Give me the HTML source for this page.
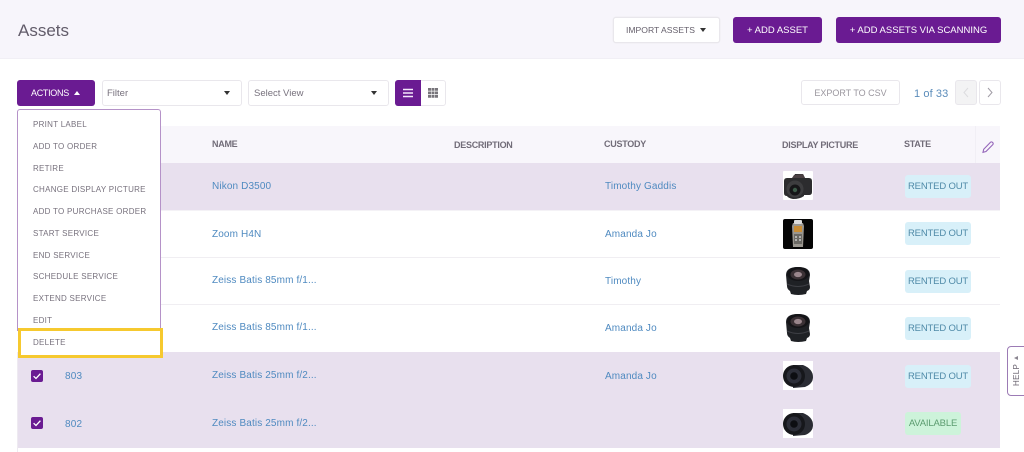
<!DOCTYPE html>
<html><head><meta charset="utf-8"><title>Assets</title>
<style>
html,body{margin:0;padding:0;background:#fff}
body{width:1024px;height:452px;position:relative;overflow:hidden;font-family:"Liberation Sans",sans-serif;color:#6a6470}
#w{position:absolute;left:0;top:0;width:1024px;height:452px;overflow:hidden;filter:blur(.3px)}
.a{position:absolute;white-space:nowrap}
.btn{position:absolute;box-sizing:border-box;border-radius:3px;background:#6a1b92;color:#fff;font-size:9.5px;line-height:27px;text-align:center;height:26px}
.w{position:absolute;box-sizing:border-box;background:#fff;border:1px solid #e9e7ec;border-radius:3px}
.row{position:absolute;left:18px;width:982px}
.p{background:#e8e0ee}
.h{position:absolute;font-size:9px;line-height:14px;color:#5f5966;font-weight:bold;letter-spacing:-.27px;white-space:nowrap;opacity:.88}
.l{position:absolute;font-size:10px;line-height:14px;margin-top:2px;color:#4f8ac0;letter-spacing:.13px;white-space:nowrap}
.b{position:absolute;left:905px;width:66px;height:23px;background:#d8f0f9;border-radius:3px;color:#4f8aa8;font-size:9.5px;letter-spacing:-.17px;line-height:23px;text-align:center}
.m{position:absolute;left:33px;font-size:8px;line-height:12px;margin-top:1px;color:#77717d;letter-spacing:.27px;white-space:nowrap}
.car{position:absolute;width:0;height:0;border-left:3.5px solid transparent;border-right:3.5px solid transparent;border-top:4px solid #333}
svg{position:absolute;display:block}
</style></head><body><div id="w">
<div class="a" style="left:0;top:0;width:1024px;height:59px;background:#f7f5fb;border-bottom:1px solid #f1eff5;box-sizing:border-box"></div>
<div class="a" style="left:18px;top:20px;font-size:17px;line-height:22px;color:#625c6a">Assets</div>
<div class="w" style="left:613px;top:17px;width:107px;height:26px;font-size:8.6px;line-height:25px;padding-left:12px;color:#66606c;box-shadow:0 0 1px #ddd">IMPORT ASSETS</div>
<div class="car" style="left:700px;top:28px"></div>
<div class="btn" style="left:733px;top:17px;width:89px">+ ADD ASSET</div>
<div class="btn" style="left:836px;top:17px;width:165px">+ ADD ASSETS VIA SCANNING</div>

<div class="btn" style="left:17px;top:80px;width:78px;font-size:9px;letter-spacing:-.3px;text-align:left;padding-left:14px">ACTIONS</div>
<div class="a" style="left:74px;top:91px;width:0;height:0;border-left:3.5px solid transparent;border-right:3.5px solid transparent;border-bottom:4px solid #fff"></div>
<div class="w" style="left:102px;top:80px;width:140px;height:26px;font-size:9.5px;line-height:25px;padding-left:4px;color:#77717d">Filter</div>
<div class="car" style="left:224px;top:91px"></div>
<div class="w" style="left:248px;top:80px;width:141px;height:26px;font-size:9.5px;line-height:25px;padding-left:5px;color:#77717d">Select View</div>
<div class="car" style="left:371px;top:91px"></div>
<div class="w" style="left:395px;top:80px;width:51px;height:26px"></div>
<div class="a" style="left:395px;top:80px;width:26px;height:26px;background:#6a1b92;border-radius:3px 0 0 3px"></div>
<svg style="left:403px;top:88px" width="10" height="10"><path d="M0 1.500h10M0 5h10M0 8.500h10" stroke="#f4e8fb" stroke-width="1.600"/></svg>
<svg style="left:428px;top:88px" width="10" height="10"><path d="M0 0h3v2.800H0zM3.500 0h3v2.800h-3zM7 0h3v2.800H7zM0 3.500h3v2.800H0zM3.500 3.500h3v2.800h-3zM7 3.500h3v2.800H7zM0 7h3v2.800H0zM3.500 7h3v2.800h-3zM7 7h3v2.800H7z" fill="#77747a"/></svg>

<div class="w" style="left:801px;top:80px;width:99px;height:25px;font-size:9px;line-height:24px;text-align:center;color:#9b979f">EXPORT TO CSV</div>
<div class="a" style="left:914px;top:87px;font-size:11px;line-height:15px;color:#5b8cba;letter-spacing:.1px">1 of 33</div>
<div class="w" style="left:955px;top:80px;width:22px;height:25px;background:#f3f3f4"></div>
<svg style="left:962px;top:87px" width="8" height="11"><path d="M6 1L2 5.500 6 10" fill="none" stroke="#dcdcdf" stroke-width="1"/></svg>
<div class="w" style="left:979px;top:80px;width:22px;height:25px"></div>
<svg style="left:986px;top:87px" width="8" height="11"><path d="M2 1l4 4.500L2 10" fill="none" stroke="#a09ca5" stroke-width="1"/></svg>

<div class="row" style="top:126px;height:37px;background:#f8f6fb"></div>
<div class="a" style="left:975px;top:126px;width:1px;height:37px;background:#f1eff5"></div>
<div class="row p" style="top:163px;height:47px"></div>
<div class="row" style="top:257px;height:1px;background:#f0eef2"></div>
<div class="row" style="top:304px;height:1px;background:#f0eef2"></div>
<div class="row" style="top:210px;height:1px;background:#f4f2f6"></div>
<div class="row p" style="top:352px;height:96px"></div>
<div class="a" style="left:17px;top:352px;width:1px;height:100px;background:#eeeaf1"></div>

<div class="h" style="left:212px;top:137px">NAME</div>
<div class="h" style="left:454px;top:138px">DESCRIPTION</div>
<div class="h" style="left:604px;top:137px">CUSTODY</div>
<div class="h" style="left:782px;top:138px">DISPLAY PICTURE</div>
<div class="h" style="left:904px;top:137px">STATE</div>
<svg style="left:981px;top:140px" width="14" height="14"><path d="M2 12.300l.7-3L9.500 2.300a1.300 1.300 0 0 1 1.900 0l.4.4a1.300 1.300 0 0 1 0 1.900L5 11.500z" fill="none" stroke="#9566ba" stroke-width="1.100"/></svg>

<div class="l" style="left:212px;top:178px">Nikon D3500</div>
<div class="l" style="left:212px;top:226px">Zoom H4N</div>
<div class="l" style="left:212px;top:272px">Zeiss Batis 85mm f/1...</div>
<div class="l" style="left:212px;top:319px">Zeiss Batis 85mm f/1...</div>
<div class="l" style="left:212px;top:367px">Zeiss Batis 25mm f/2...</div>
<div class="l" style="left:212px;top:415px">Zeiss Batis 25mm f/2...</div>
<div class="l" style="left:605px;top:178px">Timothy Gaddis</div>
<div class="l" style="left:605px;top:226px">Amanda Jo</div>
<div class="l" style="left:605px;top:273px">Timothy</div>
<div class="l" style="left:605px;top:320px">Amanda Jo</div>
<div class="l" style="left:605px;top:368px">Amanda Jo</div>
<div class="l" style="left:65px;top:368px;letter-spacing:.2px">803</div>
<div class="l" style="left:65px;top:416px;letter-spacing:.2px">802</div>

<svg style="left:31px;top:370px" width="12" height="12"><rect width="12" height="12" rx="2" fill="#6a1b92"/><path d="M2.600 6.200l2.400 2.300 4.400-4.800" fill="none" stroke="#fff" stroke-width="1.300"/></svg>
<svg style="left:31px;top:417px" width="12" height="12"><rect width="12" height="12" rx="2" fill="#6a1b92"/><path d="M2.600 6.200l2.400 2.300 4.400-4.800" fill="none" stroke="#fff" stroke-width="1.300"/></svg>

<!-- camera -->
<svg style="left:783px;top:171px" width="30" height="30"><rect width="30" height="29" rx="1" fill="#fff"/><path d="M1 10q0-3 3-3h6l2-4h8l2 4h4q3 0 3 3v11q0 3-3 3h-5v1q-4 3-11 3-5-1-6-3-3 0-3-3z" fill="#2c2c2e"/><path d="M11 4l9-1 2 4H9z" fill="#4b4144"/><circle cx="12" cy="18" r="8.500" fill="#3d3d3f"/><circle cx="12" cy="19" r="5.500" fill="#161618"/><circle cx="12" cy="19" r="2.200" fill="#3c5a48"/></svg>
<!-- recorder -->
<svg style="left:783px;top:219px" width="30" height="30"><rect width="30" height="30" rx="2" fill="#050505"/><path d="M10 4h10l1 3-1 21H10L9 7z" fill="#9a968f"/><rect x="11" y="1" width="8" height="4" rx="1" fill="#dcdcdc"/><rect x="11" y="7" width="8" height="6" fill="#c98d35"/><rect x="11" y="15" width="8" height="10" fill="#6b6964"/><path d="M12 18h2M16 18h2M12 21h2M16 21h2" stroke="#ddd" stroke-width="1.200"/></svg>
<!-- lens 85 -->
<svg style="left:785px;top:266px" width="26" height="30"><path d="M1 9q0-8 12-8t12 8l-1 6 1 6q0 3-3 4l-1 3q-8 2-15 0l-1-3q-3-2-3-5z" fill="#1f2125"/><ellipse cx="13" cy="8" rx="11" ry="7" fill="#141417"/><ellipse cx="13" cy="8.500" rx="7.500" ry="5" fill="#3b3135"/><ellipse cx="13" cy="8.500" rx="4" ry="2.600" fill="#9a868c"/><path d="M2 18q11 5 22 0" stroke="#3d3e44" fill="none"/></svg>
<svg style="left:785px;top:313px" width="26" height="30"><path d="M1 9q0-8 12-8t12 8l-1 6 1 6q0 3-3 4l-1 3q-8 2-15 0l-1-3q-3-2-3-5z" fill="#1f2125"/><ellipse cx="13" cy="8" rx="11" ry="7" fill="#141417"/><ellipse cx="13" cy="8.500" rx="7.500" ry="5" fill="#3b3135"/><ellipse cx="13" cy="8.500" rx="4" ry="2.600" fill="#9a868c"/><path d="M2 18q11 5 22 0" stroke="#3d3e44" fill="none"/></svg>
<!-- lens 25 -->
<svg style="left:783px;top:361px" width="30" height="30"><rect width="30" height="29" fill="#fff"/><path d="M10 4h10q10 4 10 12 0 7-8 10l-12 1z" fill="#2a2c33"/><circle cx="11" cy="15" r="11" fill="#16171b"/><circle cx="11" cy="15" r="7.500" fill="#2c2e38"/><circle cx="11" cy="15" r="3.800" fill="#0d0e12"/></svg>
<svg style="left:783px;top:409px" width="30" height="30"><rect width="30" height="29" fill="#fff"/><path d="M10 4h10q10 4 10 12 0 7-8 10l-12 1z" fill="#2a2c33"/><circle cx="11" cy="15" r="11" fill="#16171b"/><circle cx="11" cy="15" r="7.500" fill="#2c2e38"/><circle cx="11" cy="15" r="3.800" fill="#0d0e12"/></svg>

<div class="b" style="top:175px">RENTED OUT</div>
<div class="b" style="top:222px">RENTED OUT</div>
<div class="b" style="top:270px">RENTED OUT</div>
<div class="b" style="top:317px">RENTED OUT</div>
<div class="b" style="top:365px">RENTED OUT</div>
<div class="b" style="top:412px;width:56px;background:#cdf3da;color:#5c9c70">AVAILABLE</div>

<!-- dropdown -->
<div class="a" style="left:17px;top:109px;width:144px;height:222px;box-sizing:border-box;background:#fff;border:1px solid #b592c8;border-bottom:0;border-radius:3px 3px 0 0"></div>
<div class="a" style="left:18px;top:328px;width:145px;height:30px;box-sizing:border-box;background:#fff;border:3px solid #f6c92f"></div>
<div class="m" style="top:118px">PRINT LABEL</div>
<div class="m" style="top:140px">ADD TO ORDER</div>
<div class="m" style="top:162px">RETIRE</div>
<div class="m" style="top:183px">CHANGE DISPLAY PICTURE</div>
<div class="m" style="top:205px">ADD TO PURCHASE ORDER</div>
<div class="m" style="top:227px">START SERVICE</div>
<div class="m" style="top:249px">END SERVICE</div>
<div class="m" style="top:270px">SCHEDULE SERVICE</div>
<div class="m" style="top:292px">EXTEND SERVICE</div>
<div class="m" style="top:314px">EDIT</div>
<div class="m" style="top:336px">DELETE</div>

<!-- help -->
<div class="a" style="left:1007px;top:346px;width:20px;height:50px;box-sizing:border-box;background:#fff;border:1px solid #9c7bb5;border-radius:4px 0 0 4px"></div>
<div class="a" style="left:1009px;top:372px;width:16px;height:12px;font-size:8px;line-height:12px;text-align:center;color:#6a6470;transform:rotate(-90deg);letter-spacing:.3px">HELP</div>
<div class="a" style="left:1014px;top:356px;width:0;height:0;border-top:2.500px solid transparent;border-bottom:2.500px solid transparent;border-right:4px solid #8a8590"></div>
</div></body></html>
